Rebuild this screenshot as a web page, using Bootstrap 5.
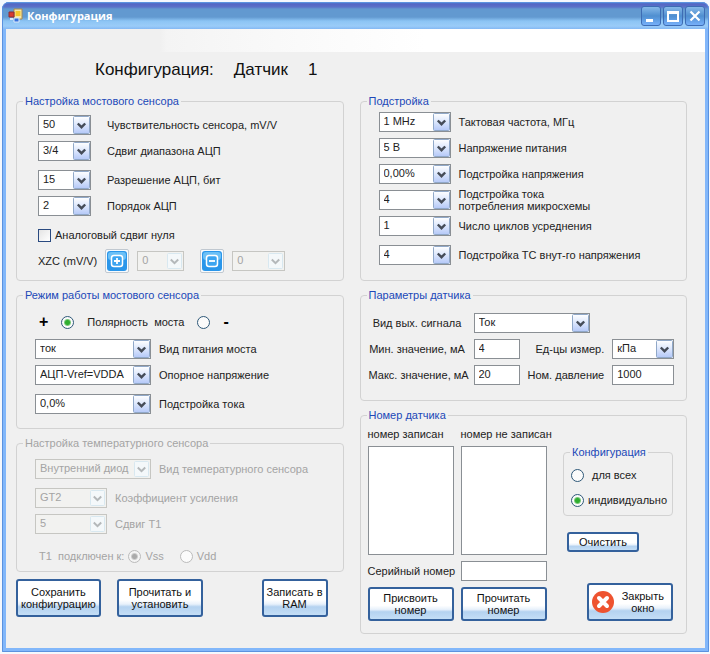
<!DOCTYPE html>
<html lang="ru">
<head>
<meta charset="utf-8">
<meta name="viewport" content="width=device-width, initial-scale=1">
<title>Конфигурация</title>
<link href="https://cdn.jsdelivr.net/npm/bootstrap@5.3.0/dist/css/bootstrap.min.css" rel="stylesheet">
<style>
body{font-family:"Liberation Sans",Arial,sans-serif;font-size:11px;line-height:12px;color:#222;background:#f5f8fd;padding:2px 1px 2px 2px}
.win{background:#f0f0f0;border:solid #82b7fa;border-width:0 4px 4px;border-radius:7px 7px 0 0;outline:1px solid #5b92df;outline-offset:-1px}
.titlebar{height:27px;margin:0 -4px;padding:0 4px 0 6px;border-radius:7px 7px 0 0;background:linear-gradient(#4a8fd6 0,#5566c4 2px,#5a72c8 5px,#6299d0 7px,#6299d0 15px,#8cc4f4 19px,#9accf8 24px,#84b8f4 27px)}
.titlebar h1{font:bold 11px/16px "Open Sans","Noto Sans",sans-serif;color:#fff}
.capbtns{gap:2px}
.capbtn{width:20px;height:20px;padding:0;border:1px solid #3d6cb4;border-radius:3px;background:linear-gradient(#86b8e8,#4f8fd0 50%,#76b0fa);display:flex}
.banner{height:23px;background:linear-gradient(90deg,#f0f0f0 22%,#f4f4f4 23%,#fafafa 42%,#fff 60%)}
h2{display:flex;gap:20px;font-size:17px;line-height:20px;color:#111;margin:8px 0 14px 89px}
.panes{display:grid;grid-template-columns:minmax(0,1fr) minmax(0,1fr);column-gap:16px;padding:0 18px 14px 10px}
.pane{display:flex;flex-direction:column;gap:7px}
/* group box: the frame line runs through the middle of the legend */
.gbox{position:relative;min-width:0}
.gbox::before{content:"";position:absolute;inset:7px 0 0;border:1px solid #d2d2d2;border-radius:4px;pointer-events:none}
.gbox legend{position:relative;float:left;width:auto;margin:0 0 0 7px;padding:0 2px;font-size:11px;line-height:14px;color:#2048b8;background:#f0f0f0}
.gbody{position:relative;clear:both;display:flex;flex-direction:column;gap:6px}
.g-bridge{padding:7px 22px 10px}
.g-mode{padding:12px 19px 15px}
.g-temp{padding:9px 19px 8px}
.g-trim{padding:4px 19px 16px}
.g-serial{padding:6px 14px 13px 8px}
.line{display:flex;align-items:center;height:20px;white-space:nowrap}
.line.far{margin-top:3px}
.line.opt{height:16px}
.combo,.field{height:20px;padding:0 4px 2px;border:1px solid #8a8f94;border-radius:0;background-color:#fff;color:#222;font-size:11px;line-height:16px;flex:none}
.combo{appearance:none;padding-right:18px;background-repeat:no-repeat;background-position:right center;background-image:url("data:image/svg+xml,%3Csvg xmlns='http://www.w3.org/2000/svg' width='17' height='18'%3E%3Cdefs%3E%3ClinearGradient id='g' x2='0' y2='1'%3E%3Cstop stop-color='%23fff'/%3E%3Cstop offset='.5' stop-color='%23dbe6fc'/%3E%3Cstop offset='1' stop-color='%23b4c8f8'/%3E%3C/linearGradient%3E%3C/defs%3E%3Crect x='.5' y='.5' width='16' height='17' rx='1' fill='url(%23g)' stroke='%2390a8c8'/%3E%3Cpath d='M4.800 7.500l3.700 3.700 3.700-3.700' fill='none' stroke='%23454c58' stroke-width='2.400'/%3E%3C/svg%3E")}
.combo:disabled{opacity:1;color:#a4a4a4;border-color:#c6c6c2;background-color:#f2f2f0;background-image:url("data:image/svg+xml,%3Csvg xmlns='http://www.w3.org/2000/svg' width='17' height='18'%3E%3Crect x='1.500' y='1.500' width='14' height='15' rx='1' fill='%23f4f8fa' stroke='%23d8e8f0'/%3E%3Cpath d='M4.800 7.500l3.700 3.700 3.700-3.700' fill='none' stroke='%23b4b8ba' stroke-width='2'/%3E%3C/svg%3E")}
.w-xs{width:47px}.w-s{width:53px}.w-m{width:72px}.w-l{width:116px}
.tick{appearance:none;flex:none;width:13px;height:13px;margin:0;border:1px solid #2a4a80;background:linear-gradient(135deg,#e4e4e4,#fff)}
.dot{appearance:none;flex:none;width:13px;height:13px;margin:0;border:1px solid #2e5878;border-radius:50%;background:#fbfbfb}
.dot:checked{background:radial-gradient(circle,#2fae2f 0 2px,#7cc97c 3px,#fbfbfb 4px)}
.dot:disabled{opacity:1;border-color:#bbb}
.dot:disabled:checked{background:radial-gradient(circle,#aaa 0 2px,#ccc 3px,#f4f4f4 4px)}
.off,.off legend{color:#a4a4a4}
.polarity{gap:13px}
.sq{width:24px;height:24px;padding:1px;border:1px solid #c0c8d0;border-radius:2px;background:#f8fbfe;display:flex;flex:none}
.sign{font-size:16px;font-weight:bold;line-height:16px;color:#000}
.push{height:20px;padding:0 10px;border:2px solid #34619c;border-radius:3px;font-size:11px;line-height:12px;color:#111;white-space:nowrap;background:linear-gradient(#fff 0 55%,#e8f1fb 68%,#b4d2f0 76%,#c4def6 100%)}
.push.mid{height:34px}
.push.tall{height:38px}
.push.snug{padding:0 3px}
.list{width:100%;height:109px;border:1px solid #8a8f94;border-radius:0;background:#fff;display:block}
.params{display:grid;grid-template-columns:97px 46px 1fr 62px;column-gap:8px;row-gap:6px;align-items:center;text-align:center;white-space:nowrap;margin:11px 14px 16px 9px}
.wide{grid-column:2/5}
.serials{display:grid;grid-template-columns:86px 86px;gap:6px 7px;align-items:center;white-space:nowrap}
.side{width:110px;padding-top:17px}
</style>
</head>
<body>
<main class="win">
  <header class="titlebar d-flex align-items-center">
    <svg width="15" height="15" viewBox="0 0 15 15" aria-hidden="true"><path d="M6 1h8v10H6z" fill="#f5e7a8" stroke="#a8884a"/><path d="M7.500 3h5v5h-5z" fill="#f6c62c"/><path d="M1 4h5v5H1z" fill="#d83a30" stroke="#8c2c34"/><path d="M6 10h5v4H6z" fill="#3470dc" stroke="#dce8fa"/><path d="M2 10h3v2H2z" fill="#dce8fa"/></svg>
    <h1 class="mb-0 ms-1 me-auto">Конфигурация</h1>
    <div class="d-flex capbtns">
      <button class="capbtn" type="button" aria-label="Свернуть"><svg width="18" height="18" aria-hidden="true"><path d="M4 12h7v3H4z" fill="#fff"/></svg></button>
      <button class="capbtn" type="button" aria-label="Развернуть"><svg width="18" height="18" aria-hidden="true"><path d="M4 5h10v9H4zM4 6h10" fill="none" stroke="#fff" stroke-width="2"/></svg></button>
      <button class="capbtn" type="button" aria-label="Закрыть"><svg width="18" height="18" aria-hidden="true"><path d="M4.500 4.500l9 9m0-9l-9 9" stroke="#fff" stroke-width="2.200"/></svg></button>
    </div>
  </header>
  <div class="banner"></div>
  <h2><span>Конфигурация:</span><span>Датчик</span><span>1</span></h2>
  <div class="panes">
    <div class="pane">
      <fieldset class="gbox">
        <legend>Настройка мостового сенсора</legend>
        <div class="gbody g-bridge">
          <div class="line"><select class="combo w-s" id="a1"><option>50</option></select><label class="ms-3" for="a1">Чувствительность сенсора, mV/V</label></div>
          <div class="line"><select class="combo w-s" id="a2"><option>3/4</option></select><label class="ms-3" for="a2">Сдвиг диапазона АЦП</label></div>
          <div class="line far"><select class="combo w-s" id="a3"><option>15</option></select><label class="ms-3" for="a3">Разрешение АЦП, бит</label></div>
          <div class="line"><select class="combo w-s" id="a4"><option>2</option></select><label class="ms-3" for="a4">Порядок АЦП</label></div>
          <div class="line far"><input class="tick" type="checkbox" id="a5"><label class="ms-1" for="a5">Аналоговый сдвиг нуля</label></div>
          <div class="line"><label for="a6">XZC (mV/V)</label>
            <button class="sq ms-2" type="button" aria-label="Увеличить"><svg width="20" height="20" aria-hidden="true"><rect width="20" height="20" rx="3" fill="#2a96ea"/><rect x="1" y="1" width="18" height="8" rx="3" fill="#6cc0f6"/><rect x="4.500" y="4.500" width="11" height="11" rx="2.500" fill="#3ca4f0" stroke="#fff" stroke-width="1.500"/><path d="M7 10h6M10 7v6" stroke="#fff" stroke-width="1.800"/></svg></button>
            <select class="combo w-xs ms-2 me-3" id="a6" disabled><option>0</option></select>
            <button class="sq" type="button" aria-label="Уменьшить"><svg width="20" height="20" aria-hidden="true"><rect width="20" height="20" rx="3" fill="#2a96ea"/><rect x="1" y="1" width="18" height="8" rx="3" fill="#6cc0f6"/><rect x="4.500" y="4.500" width="11" height="11" rx="2.500" fill="#3ca4f0" stroke="#fff" stroke-width="1.500"/><path d="M7 10h6" stroke="#fff" stroke-width="1.800"/></svg></button>
            <select class="combo w-s ms-2" aria-label="XZC, отрицательный" disabled><option>0</option></select></div>
        </div>
      </fieldset>
      <fieldset class="gbox">
        <legend>Режим работы мостового сенсора</legend>
        <div class="gbody g-mode">
          <div class="line opt polarity ps-1"><label class="sign" for="b1">+</label><input class="dot" type="radio" name="pol" id="b1" checked><span>Полярность &nbsp;моста</span><input class="dot" type="radio" name="pol" id="b2"><label class="sign" for="b2">-</label></div>
          <div class="line far"><select class="combo w-l" id="b3"><option>ток</option></select><label class="ms-2" for="b3">Вид питания моста</label></div>
          <div class="line"><select class="combo w-l" id="b4"><option>АЦП-Vref=VDDA</option></select><label class="ms-2" for="b4">Опорное напряжение</label></div>
          <div class="line far"><select class="combo w-l" id="b5"><option>0,0%</option></select><label class="ms-2" for="b5">Подстройка тока</label></div>
        </div>
      </fieldset>
      <fieldset class="gbox off">
        <legend>Настройка температурного сенсора</legend>
        <div class="gbody g-temp">
          <div class="line"><select class="combo w-l" id="c1" disabled><option>Внутренний диод</option></select><label class="ms-2" for="c1">Вид температурного сенсора</label></div>
          <div class="line far"><select class="combo w-m" id="c2" disabled><option>GT2</option></select><label class="ms-2" for="c2">Коэффициент усиления</label></div>
          <div class="line"><select class="combo w-m" id="c3" disabled><option>5</option></select><label class="ms-2" for="c3">Сдвиг Т1</label></div>
          <div class="line opt mt-2"><span class="ms-1">Т1 &nbsp;подключен к:</span><input class="dot ms-1" type="radio" name="t1" id="c4" checked disabled><label class="ms-1" for="c4">Vss</label><input class="dot ms-3" type="radio" name="t1" id="c5" disabled><label class="ms-1" for="c5">Vdd</label></div>
        </div>
      </fieldset>
      <div class="d-flex">
        <button class="push tall snug" type="button">Сохранить<br>конфигурацию</button>
        <button class="push tall ms-3" type="button">Прочитать и<br>установить</button>
        <button class="push tall snug ms-auto me-3" type="button">Записать в<br>RAM</button>
      </div>
    </div>
    <div class="pane">
      <fieldset class="gbox">
        <legend>Подстройка</legend>
        <div class="gbody g-trim">
          <div class="line"><select class="combo w-m" id="d1"><option>1 MHz</option></select><label class="ms-2" for="d1">Тактовая частота, МГц</label></div>
          <div class="line"><select class="combo w-m" id="d2"><option>5 В</option></select><label class="ms-2" for="d2">Напряжение питания</label></div>
          <div class="line"><select class="combo w-m" id="d3"><option>0,00%</option></select><label class="ms-2" for="d3">Подстройка напряжения</label></div>
          <div class="line"><select class="combo w-m" id="d4"><option>4</option></select><label class="ms-2" for="d4">Подстройка тока<br>потребления микросхемы</label></div>
          <div class="line"><select class="combo w-m" id="d5"><option>1</option></select><label class="ms-2" for="d5">Число циклов усреднения</label></div>
          <div class="line far"><select class="combo w-m" id="d6"><option>4</option></select><label class="ms-2" for="d6">Подстройка ТС внут-го напряжения</label></div>
        </div>
      </fieldset>
      <fieldset class="gbox">
        <legend>Параметры датчика</legend>
        <div class="gbody">
          <div class="params">
            <label for="e1">Вид вых. сигнала</label><select class="combo w-l wide" id="e1"><option>Ток</option></select>
            <label for="e2">Мин. значение, мА</label><input class="field w-100" id="e2" value="4"><label class="text-end" for="e3">Ед-цы измер.</label><select class="combo" id="e3"><option>кПа</option></select>
            <label for="e4">Макс. значение, мА</label><input class="field w-100" id="e4" value="20"><label class="text-end" for="e5">Ном. давление</label><input class="field w-100" id="e5" value="1000">
          </div>
        </div>
      </fieldset>
      <fieldset class="gbox">
        <legend>Номер датчика</legend>
        <div class="gbody g-serial flex-row justify-content-between">
          <div class="serials">
            <label for="f1">номер записан</label><label for="f2">номер не записан</label>
            <select class="list" id="f1" size="5"></select><select class="list" id="f2" size="5"></select>
            <label for="f3">Серийный номер</label><input class="field w-100" id="f3">
            <button class="push mid" type="button">Присвоить<br>номер</button><button class="push mid" type="button">Прочитать<br>номер</button>
          </div>
          <div class="side d-flex flex-column">
            <fieldset class="gbox">
              <legend>Конфигурация</legend>
              <div class="gbody px-2 py-2">
                <div class="line opt"><input class="dot" type="radio" name="cfg" id="g1"><label class="ms-2" for="g1">для всех</label></div>
                <div class="line opt far"><input class="dot" type="radio" name="cfg" id="g2" checked><label class="ms-1" for="g2">индивидуально</label></div>
              </div>
            </fieldset>
            <button class="push mt-3 ms-1 align-self-start" type="button">Очистить</button>
            <button class="push tall snug mt-auto align-self-end d-flex align-items-center" type="button"><svg class="me-2" width="22" height="22" viewBox="1 1 22 22" aria-hidden="true"><circle cx="12" cy="12" r="11" fill="#ee5330"/><path d="M8 8l8 8m0-8l-8 8" stroke="#fff" stroke-width="4" stroke-linecap="round"/></svg><span class="pe-1">Закрыть<br>окно</span></button>
          </div>
        </div>
      </fieldset>
    </div>
  </div>
</main>
<script src="https://cdn.jsdelivr.net/npm/bootstrap@5.3.0/dist/js/bootstrap.bundle.min.js"></script>
</body>
</html>
